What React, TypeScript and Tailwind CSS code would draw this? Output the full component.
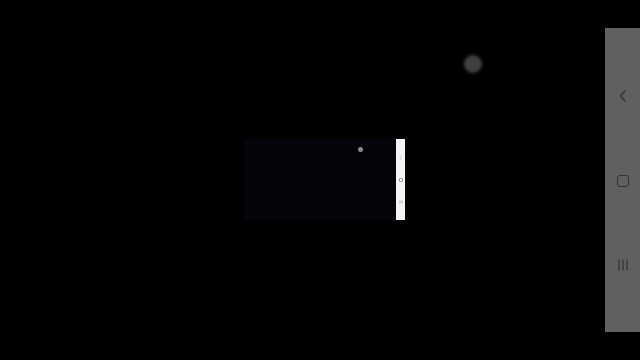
export default function App() {
  return (
    <div className="relative flex h-[360px] w-[640px] overflow-hidden bg-black font-['Liberation_Sans',sans-serif]">
      {/* mirrored phone screen */}
      <div className="flex-1 pl-[244px] pt-[139px]">
        <div className="flex h-[81px] w-[161px]">
          <div className="relative flex-1 bg-[#05040b]">
            <div className="absolute left-[114px] top-[8px] h-[5px] w-[5px] rounded-full bg-[#8a8a8e]" />
          </div>
          <div className="flex w-[9px] flex-col items-center justify-center gap-[18px] bg-[#f4f4f6]">
            <svg width="3" height="5" viewBox="0 0 3 5" className="text-[#9a9a9e]">
              <path d="M2.5 0.5 L0.8 2.5 L2.5 4.5" fill="none" stroke="currentColor" strokeWidth="0.6" />
            </svg>
            <div className="h-[4px] w-[4px] rounded-[1px] border-[0.6px] border-[#9a9a9e]" />
            <svg width="4" height="4" viewBox="0 0 4 4" className="text-[#9a9a9e]">
              <path d="M0.7 0.5 V3.5 M2 0.5 V3.5 M3.3 0.5 V3.5" stroke="currentColor" strokeWidth="0.5" />
            </svg>
          </div>
        </div>
      </div>

      {/* floating touch button */}
      <div className="absolute left-[464px] top-[55px] h-[18px] w-[18px] rounded-full bg-[#404040] blur-[1.5px]" />

      {/* navigation bar */}
      <div className="my-[28px] flex w-[35px] flex-col items-center justify-center gap-[72px] bg-[#606060] text-[#343434]">
        <svg width="10" height="14" viewBox="0 0 10 14">
          <path d="M7.5 1.5 L2.5 7 L7.5 12.5" fill="none" stroke="currentColor" strokeWidth="1.4" />
        </svg>
        <div className="h-[12px] w-[12px] rounded-[3px] border-[1.4px] border-[#343434]" />
        <svg width="12" height="12" viewBox="0 0 12 12">
          <path d="M2 0.5 V11.5 M6 0.5 V11.5 M10 0.5 V11.5" stroke="currentColor" strokeWidth="1.3" />
        </svg>
      </div>
    </div>
  );
}
